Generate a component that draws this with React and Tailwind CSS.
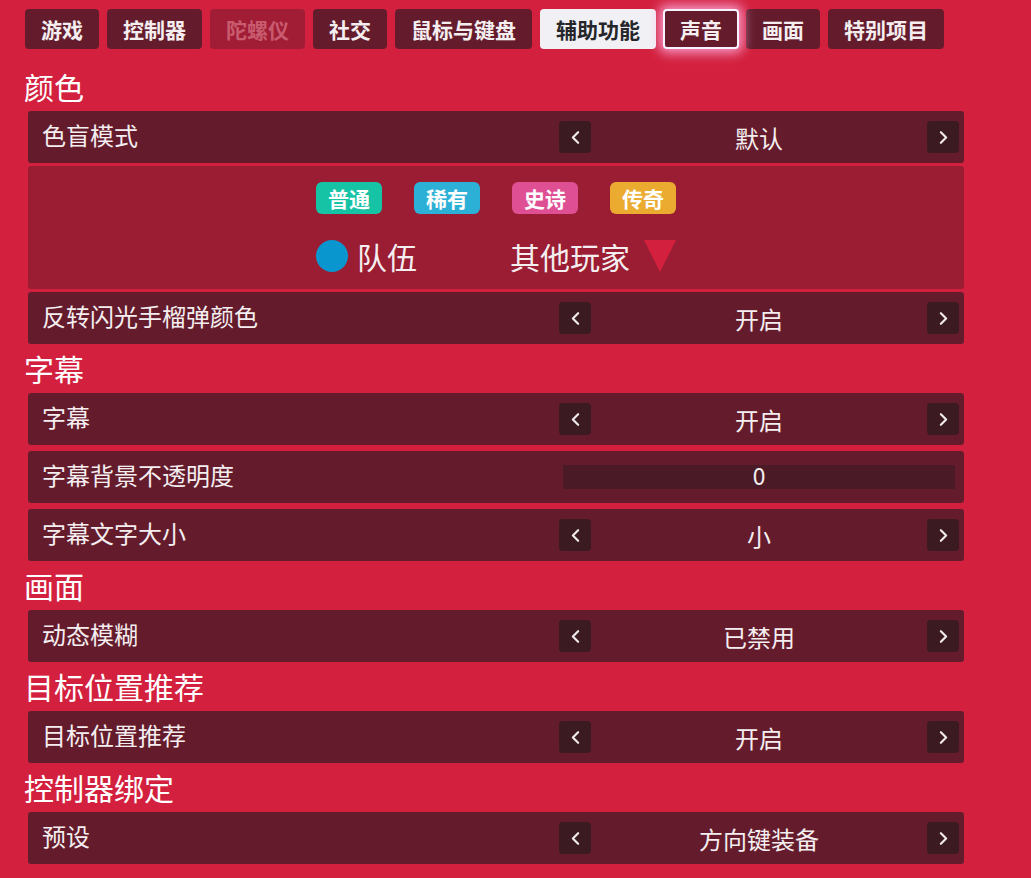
import React from "react";
import { ChevronLeft, ChevronRight } from "lucide-react";

const tabs = [
  { label: "游戏" },
  { label: "控制器" },
  { label: "陀螺仪", disabled: true },
  { label: "社交" },
  { label: "鼠标与键盘" },
  { label: "辅助功能", active: true },
  { label: "声音", focused: true },
  { label: "画面" },
  { label: "特别项目" },
];

const sections = [
  {
    title: "颜色",
    tight: true,
    rows: [
      { label: "色盲模式", value: "默认" },
      { preview: true },
      { label: "反转闪光手榴弹颜色", value: "开启" },
    ],
  },
  {
    title: "字幕",
    rows: [
      { label: "字幕", value: "开启" },
      { label: "字幕背景不透明度", slider: "0" },
      { label: "字幕文字大小", value: "小" },
    ],
  },
  { title: "画面", rows: [{ label: "动态模糊", value: "已禁用" }] },
  { title: "目标位置推荐", rows: [{ label: "目标位置推荐", value: "开启" }] },
  { title: "控制器绑定", rows: [{ label: "预设", value: "方向键装备" }] },
];

const rarities = [
  { label: "普通", color: "bg-[#17c3a5]" },
  { label: "稀有", color: "bg-[#2db0d6]" },
  { label: "史诗", color: "bg-[#de4f94]" },
  { label: "传奇", color: "bg-[#eaab30]" },
];

function Tab({ label, disabled, active, focused }) {
  let cls = "px-4 bg-[#641c2d] text-[#f4eef0]";
  if (disabled) cls = "px-4 bg-[#a11d36] text-[#c85b6e]";
  if (active) cls = "px-4 bg-[#f1f1f5] text-[#26262a]";
  if (focused)
    cls =
      "px-[15px] -mx-px relative z-10 bg-[#641c2d] text-[#f4eef0] border-2 border-[#f6f2ff] shadow-[0_0_12px_4px_rgba(255,185,235,0.8)]";
  return (
    <div
      className={`h-10 flex items-center rounded-[4px] text-[21px] font-bold leading-none ${cls}`}
    >
      {label}
    </div>
  );
}

function ArrowButton({ dir }) {
  const Icon = dir === "left" ? ChevronLeft : ChevronRight;
  return (
    <div className="w-8 h-8 rounded-[4px] bg-[#3b1a22] flex items-center justify-center text-[#f0eaec]">
      <Icon size={21} strokeWidth={2.5} />
    </div>
  );
}

function SettingRow({ label, value, slider }) {
  return (
    <div className="h-[52px] rounded-[3px] bg-[#641c2d] flex items-center pl-[14px] pr-[5px]">
      <div className="flex-1 text-[24px] text-[#f4eef0] leading-none -mt-1">
        {label}
      </div>
      {slider !== undefined ? (
        <div className="w-[400px] px-1">
          <div className="h-6 bg-[#4a1b26] flex items-center justify-center text-[23px] text-[#f4eef0] font-['Liberation_Sans_Narrow','DejaVu_Sans_Condensed',sans-serif] leading-none">
            {slider}
          </div>
        </div>
      ) : (
        <div className="w-[400px] flex items-center">
          <ArrowButton dir="left" />
          <div className="flex-1 text-center text-[24px] text-[#f4eef0] leading-none mt-0.5">
            {value}
          </div>
          <ArrowButton dir="right" />
        </div>
      )}
    </div>
  );
}

function ColorPreview() {
  return (
    <div className="h-[123px] rounded-[3px] bg-[#9b1d33] flex justify-center pt-4">
      <div className="grid grid-cols-[66px_66px_66px_66px] gap-x-8 gap-y-[26px] content-start">
        {rarities.map((r) => (
          <div
            key={r.label}
            className={`h-8 rounded-[6px] ${r.color} flex items-center justify-center text-[21px] font-bold text-white leading-none`}
          >
            {r.label}
          </div>
        ))}
        <div className="col-span-2 flex items-center h-8">
          <div className="w-8 h-8 rounded-full bg-[#0996cf]" />
          <span className="ml-[9px] text-[30px] text-[#f4eef0] leading-none">
            队伍
          </span>
        </div>
        <div className="col-span-2 flex items-center justify-between h-8 -ml-[2px]">
          <span className="text-[30px] text-[#f4eef0] leading-none">
            其他玩家
          </span>
          <svg width="32" height="32" viewBox="0 0 32 32">
            <polygon points="0,0 32,0 16,32" fill="#d3203e" />
          </svg>
        </div>
      </div>
    </div>
  );
}

export default function App() {
  return (
    <div className="w-[1031px] h-[878px] overflow-hidden bg-[#d3203e] font-['Noto_Sans_CJK_SC','Noto_Sans',sans-serif]">
      {/* top tabs */}
      <div className="flex gap-2 pl-[25px] pt-[9px]">
        {tabs.map((t) => (
          <Tab key={t.label} {...t} />
        ))}
      </div>

      <div className="pl-[24px] w-[964px] mt-[19px]">
        {sections.map((s, i) => (
          <div key={s.title} className={i === 0 ? "" : "mt-[6px]"}>
            <div className="h-[43px] text-[30px] text-white leading-none flex items-center -mt-[4px] mb-[4px]">
              {s.title}
            </div>
            <div className={`pl-1 flex flex-col ${s.tight ? "gap-[3px]" : "gap-[6px]"}`}>
              {s.rows.map((r, j) =>
                r.preview ? (
                  <ColorPreview key={j} />
                ) : (
                  <SettingRow key={j} {...r} />
                )
              )}
            </div>
          </div>
        ))}
      </div>
    </div>
  );
}
